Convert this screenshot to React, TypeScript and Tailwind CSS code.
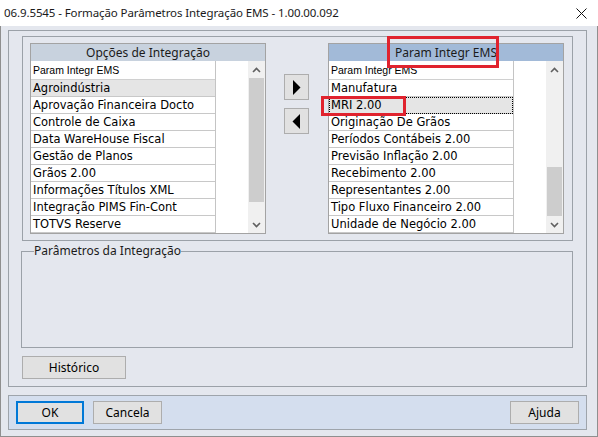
import React from 'react';

const opcoes = [
  'Agroindústria',
  'Aprovação Financeira Docto',
  'Controle de Caixa',
  'Data WareHouse Fiscal',
  'Gestão de Planos',
  'Grãos 2.00',
  'Informações Títulos XML',
  'Integração PIMS Fin-Cont',
  'TOTVS Reserve',
];

const selecionados = [
  'Manufatura',
  'MRI 2.00',
  'Originação De Grãos',
  'Períodos Contábeis 2.00',
  'Previsão Inflação 2.00',
  'Recebimento 2.00',
  'Representantes 2.00',
  'Tipo Fluxo Financeiro 2.00',
  'Unidade de Negócio 2.00',
];

function Chevron({ up }: { up?: boolean }) {
  return (
    <svg width="9" height="6" viewBox="0 0 9 6">
      <path
        d={up ? 'M1 5 L4.5 1.5 L8 5' : 'M1 1 L4.5 4.5 L8 1'}
        fill="none"
        stroke="#606060"
        strokeWidth="1.6"
      />
    </svg>
  );
}

function ScrollBar({ thumbTop, thumbHeight }: { thumbTop: number; thumbHeight: number }) {
  return (
    <div className="w-[17px] bg-[#f0f0f0] flex flex-col">
      <div className="h-[17px] flex items-center justify-center">
        <Chevron up />
      </div>
      <div className="flex-1 flex flex-col items-center">
        <div
          className="w-[15px] bg-[#cdcdcd]"
          style={{ marginTop: thumbTop, height: thumbHeight }}
        />
      </div>
      <div className="h-[17px] flex items-center justify-center">
        <Chevron />
      </div>
    </div>
  );
}

interface ListaProps {
  titulo: string;
  headerBg: string;
  itens: string[];
  selecionado: number;
  foco?: boolean;
  thumbTop: number;
  thumbHeight: number;
}

function Lista({ titulo, headerBg, itens, selecionado, foco, thumbTop, thumbHeight }: ListaProps) {
  return (
    <div className="w-[236px] h-[191px] border border-[#a3a3a3] bg-white flex flex-col">
      <div
        className={`h-[17px] flex items-center justify-center text-[12px] text-[#1b1b1b] font-['Noto_Sans',sans-serif] ${headerBg}`}
      >
        {titulo}
      </div>
      <div className="flex flex-1 min-h-0">
        <div className="w-[185px] border-r border-[#c4c4c4] flex flex-col">
          <div className="h-[19px] border-b border-[#d0d0d0] pl-[2px] leading-[18px] text-[10.5px] text-black font-['Liberation_Sans',sans-serif]">
            Param Integr EMS
          </div>
          {itens.map((item, i) => (
            <div
              key={item}
              className={`h-[17px] border-b border-[#c8c8c8] pl-[2px] leading-[16px] text-[11.5px] text-black font-['DejaVu_Sans',sans-serif] whitespace-nowrap ${
                i === selecionado ? 'bg-[#e5e5e5]' : ''
              } ${i === selecionado && foco ? 'outline-1 outline-dotted outline-black -outline-offset-1' : ''}`}
            >
              {item}
            </div>
          ))}
        </div>
        <div className="flex-1" />
        <ScrollBar thumbTop={thumbTop} thumbHeight={thumbHeight} />
      </div>
    </div>
  );
}

function SetaBotao({ dir }: { dir: 'dir' | 'esq' }) {
  return (
    <button className="w-[25px] h-[26px] bg-[#e1e1e1] border border-[#adadad] flex items-center justify-center">
      <svg width="9" height="15" viewBox="0 0 9 15">
        <polygon points={dir === 'dir' ? '1,0 8.5,7.5 1,15' : '8,0 0.5,7.5 8,15'} fill="#000" />
      </svg>
    </button>
  );
}

function Botao({ children, className }: { children: React.ReactNode; className?: string }) {
  return (
    <button
      className={`h-[23px] bg-[#e1e1e1] text-[12px] text-black font-['Noto_Sans',sans-serif] flex items-center justify-center ${className ?? ''}`}
    >
      {children}
    </button>
  );
}

export default function App() {
  return (
    <div className="w-[598px] h-[437px] bg-white flex flex-col overflow-hidden font-['Noto_Sans',sans-serif]">
      {/* barra de título */}
      <div className="h-[26px] shrink-0 flex items-center justify-between pl-[4px] pr-[11px]">
        <span className="text-[11.5px] text-[#1a1a1a] tracking-[-0.1px]">
          06.9.5545 - Formação Parâmetros Integração EMS - 1.00.00.092
        </span>
        <svg width="11" height="11" viewBox="0 0 11 11">
          <path d="M0.5 0.5 L10.5 10.5 M10.5 0.5 L0.5 10.5" stroke="#111" strokeWidth="1" />
        </svg>
      </div>

      <div className="flex-1 bg-[#e4e7ee] border-x border-b border-[#8f8f8f] flex flex-col">
        {/* moldura principal */}
        <div className="ml-[7px] mt-[4px] w-[579px] h-[357px] border border-[#9ba1a8] flex flex-col">
          <div className="ml-[13px] mt-[5px] w-[551px] h-[205px] border border-[#9ba1a8] flex items-start pl-[7px] pt-[6px]">
            <Lista
              titulo="Opções de Integração"
              headerBg="bg-[#c8d2de]"
              itens={opcoes}
              selecionado={0}
              thumbTop={0}
              thumbHeight={124}
            />
            <div className="ml-[18px] mt-[31px] flex flex-col gap-[8px]">
              <SetaBotao dir="dir" />
              <SetaBotao dir="esq" />
            </div>
            <div className="ml-[19px] relative">
              <Lista
                titulo="Param Integr EMS"
                headerBg="bg-[#a2bad8]"
                itens={selecionados}
                selecionado={1}
                foco
                thumbTop={89}
                thumbHeight={49}
              />
              {/* destaques em vermelho */}
              <div className="absolute left-[59px] top-[-7px] w-[112px] h-[32px] border-[3px] border-[#e0232e]" />
              <div className="absolute left-[-7px] top-[53px] w-[85px] h-[20px] border-[3px] border-[#e0232e]" />
            </div>
          </div>

          <fieldset className="ml-[12px] mt-[3px] w-[552px] h-[104px] border border-[#9ba1a8]">
            <legend className="ml-[12px] px-0 text-[12px] leading-[14px] text-[#1b1b1b]">
              Parâmetros da Integração
            </legend>
          </fieldset>

          <Botao className="ml-[13px] mt-[8px] w-[104px] h-[22px] border border-[#adadad]">Histórico</Botao>
        </div>

        {/* barra de botões */}
        <div className="ml-[7px] mt-[8px] w-[579px] h-[35px] bg-[#d4deee] border border-[#9ea4ab] flex items-start pt-[5px] px-[7px]">
          <Botao className="w-[68px] border-2 border-[#0078d7]">OK</Botao>
          <Botao className="ml-[9px] w-[69px] border border-[#adadad]">Cancela</Botao>
          <Botao className="ml-auto w-[69px] border border-[#adadad]">Ajuda</Botao>
        </div>
      </div>
    </div>
  );
}
